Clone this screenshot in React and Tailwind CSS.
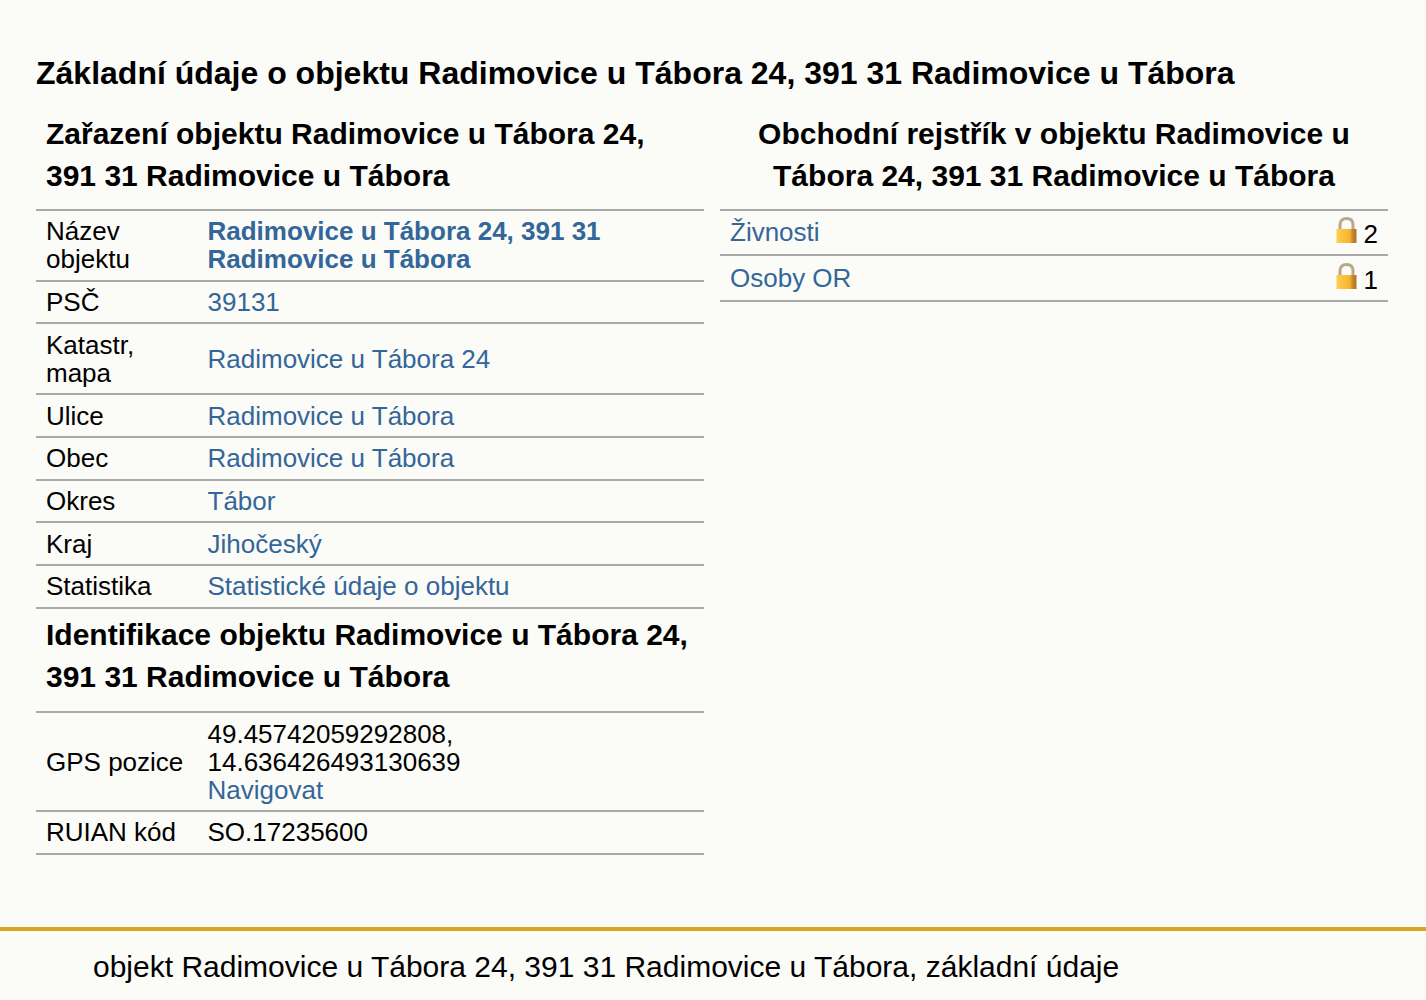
import React from 'react';

const Lock = () => (
  <svg width="21" height="26" viewBox="0 0 21 26" className="shrink-0 mb-[5px]">
    <defs>
      <linearGradient id="lockBody" x1="0" y1="0" x2="1" y2="0">
        <stop offset="0" stopColor="#ffce4f" />
        <stop offset="0.65" stopColor="#f7b52f" />
        <stop offset="0.8" stopColor="#c98a2a" />
        <stop offset="1" stopColor="#a87426" />
      </linearGradient>
    </defs>
    <path d="M4 13V7.500C4 3.600 6.500 1.500 10.500 1.500S17 3.600 17 7.500V13" fill="none" stroke="#b8a88e" strokeWidth="3" />
    <rect x="0.500" y="12" width="20" height="14" fill="url(#lockBody)" />
  </svg>
);

const Row = ({ label, children }) => (
  <div className="grid grid-cols-[161.5px_1fr] items-center border-b-2 border-[#aaaaaa] pl-[10px] py-[6.37px]">
    <div>{label}</div>
    <div className="pr-[60px]">{children}</div>
  </div>
);

const A = ({ children, bold }) => (
  <a href="#" className={bold ? 'text-[#336699] font-bold' : 'text-[#336699]'}>{children}</a>
);

const LockRow = ({ name, count, className }) => (
  <div className={`flex items-center justify-between border-b-2 border-[#aaaaaa] px-[10px] ${className}`}>
    <div className="pb-[1px]"><A>{name}</A></div>
    <div className="flex items-center gap-[7px]">
      <Lock />
      <span className="mt-[3px]">{count}</span>
    </div>
  </div>
);

export default function App() {
  return (
    <div className="min-h-screen bg-[#fbfbf7] text-black font-['Liberation_Sans',Arial,sans-serif] text-[26px] leading-[28px] flex flex-col">
      <div className="pl-[36px] pr-[38px] pt-[52px] h-[927px]">
        <h1 className="font-bold text-[32px] leading-[42px]">Základní údaje o objektu Radimovice u Tábora 24, 391 31 Radimovice u Tábora</h1>
        <div className="grid grid-cols-[668px_668px] gap-[16px] mt-[19px]">
          <div>
            <h2 className="font-bold text-[30px] leading-[42px] pl-[10px] pr-[40px] pb-[12px]">Zařazení objektu Radimovice u Tábora 24, 391 31 Radimovice u Tábora</h2>
            <div className="border-t-2 border-[#aaaaaa]">
              <Row label="Název objektu"><A bold>Radimovice u Tábora 24, 391 31 Radimovice u Tábora</A></Row>
              <Row label="PSČ"><A>39131</A></Row>
              <Row label={<>Katastr,<br />mapa</>}><A>Radimovice u Tábora 24</A></Row>
              <Row label="Ulice"><A>Radimovice u Tábora</A></Row>
              <Row label="Obec"><A>Radimovice u Tábora</A></Row>
              <Row label="Okres"><A>Tábor</A></Row>
              <Row label="Kraj"><A>Jihočeský</A></Row>
              <Row label="Statistika"><A>Statistické údaje o objektu</A></Row>
            </div>
            <h2 className="font-bold text-[30px] leading-[42px] px-[10px] pb-[13.5px] pt-[5px]">Identifikace objektu Radimovice u Tábora 24, 391 31 Radimovice u Tábora</h2>
            <div className="border-t-2 border-[#aaaaaa]">
              <Row label="GPS pozice">49.45742059292808,<br />14.636426493130639<br /><A>Navigovat</A></Row>
              <Row label="RUIAN kód">SO.17235600</Row>
            </div>
          </div>
          <div>
            <h2 className="font-bold text-[30px] leading-[42px] text-center px-[10px] pb-[12px]">Obchodní rejstřík v objektu Radimovice u Tábora 24, 391 31 Radimovice u Tábora</h2>
            <div className="border-t-2 border-[#aaaaaa]">
              <LockRow name="Živnosti" count="2" className="h-[45px]" />
              <LockRow name="Osoby OR" count="1" className="h-[46px]" />
            </div>
          </div>
        </div>
      </div>
      <footer className="border-t-4 border-[#daa520] pl-[93px] pt-[18px] text-[30px] leading-[36px] h-[73px]">
        objekt Radimovice u Tábora 24, 391 31 Radimovice u Tábora, základní údaje
      </footer>
    </div>
  );
}
